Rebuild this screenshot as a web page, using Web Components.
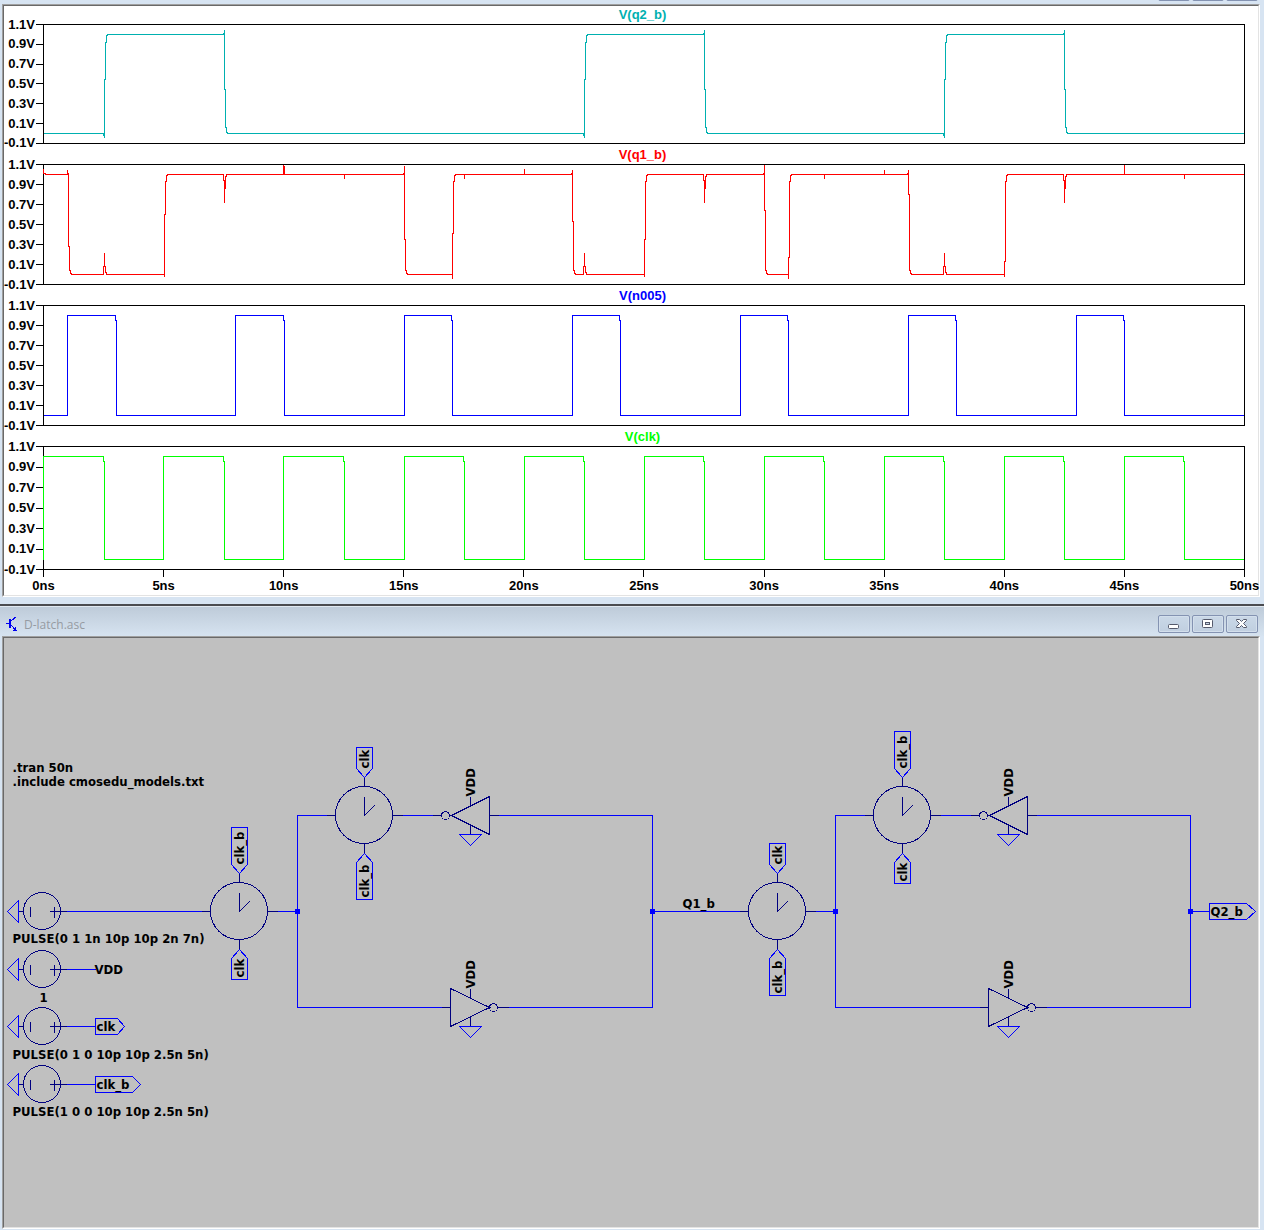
<!DOCTYPE html>
<html lang="en">
<head>
<meta charset="utf-8">
<title>D-latch.asc</title>
<style>
  body { margin: 0; background: #d7e4f2; font-family: "Liberation Sans", Arial, sans-serif; }
</style>
</head>
<body>
<sim-desktop>
  <mdi-window>
    <window-controls slot="title" cropped></window-controls>
    <wave-viewer></wave-viewer>
  </mdi-window>
  <mdi-window titled>
    <window-caption slot="title">D-latch.asc</window-caption>
    <schematic-view></schematic-view>
  </mdi-window>
</sim-desktop>

<script>
function define(name, html, setup) {
  customElements.define(name, class extends HTMLElement {
    connectedCallback() {
      if (this.shadowRoot) return;
      const root = this.attachShadow({ mode: 'open' });
      const tpl = document.createElement('template');
      tpl.innerHTML = typeof html === 'function' ? html(this) : html;
      root.append(tpl.content.cloneNode(true));
      if (setup) setup(this, root);
    }
  });
}

define('sim-desktop', `
  <style>:host { display: flex; flex-direction: column; }</style>
  <slot></slot>`);

define('mdi-window', `
  <style>
    :host { display: flex; flex-direction: column; background: #d7e4f2; padding-bottom: 7px; }
    :host([titled]) { border-top: 2px solid #4b4c50; padding-bottom: 1px; }
    header { height: 4px; overflow: hidden; display: flex; justify-content: flex-end; padding: 0 6px; }
    :host([titled]) header {
      height: 29px; border-top: 1px solid #e1e9f1; justify-content: stretch;
      background: linear-gradient(#becbd9, #d6e3f0);
    }
    .outer { margin: 0 4px 0 2px; border: 1px solid; border-color: #a0a0a0 #fff #fff #a0a0a0; }
    .inner { border: 1px solid; border-color: #696969 #e3e3e3 #e3e3e3 #696969; }
  </style>
  <header><slot name="title"></slot></header>
  <div class="outer"><div class="inner"><slot></slot></div></div>`);

define('window-controls', `
  <style>
    :host { display: flex; gap: 2px; align-items: center; }
    :host([cropped]) { align-items: flex-end; height: 1px; }
    button {
      box-sizing: border-box; width: 32px; height: 18px; padding: 0; display: flex;
      align-items: center; justify-content: center;
      border: 1px solid #8493b2; border-radius: 2px;
      background: linear-gradient(#cad8e7, #c0cfe0); box-shadow: inset 0 0 0 1px #d3dfec;
    }
    svg { display: block; width: 14px; height: 12px; }
  </style>
  <button aria-label="Minimize"><svg viewBox="0 0 14 12"><rect x="1.5" y="6.5" width="10" height="4" rx="1" fill="#fff" stroke="#555a6c"/></svg></button>
  <button aria-label="Restore"><svg viewBox="0 0 14 12"><rect x="1.5" y="1.5" width="10" height="8" rx="1" fill="#fff" stroke="#555a6c"/><rect x="4.5" y="4.5" width="4" height="2" fill="#c5d3e2" stroke="#555a6c"/></svg></button>
  <button aria-label="Close"><svg viewBox="0 0 14 12"><path d="M1.500 1.500H4.500L6.500 3.500 8.500 1.500H11.500V2.500L8.500 5.500 11.500 8.500V9.500H8.500L6.500 7.500 4.500 9.500H1.500V8.500L4.500 5.500 1.500 2.500Z" fill="#fff" stroke="#555a6c"/></svg></button>`);

define('window-caption', `
  <style>
    :host { display: flex; flex: 1; align-items: center; gap: 7px;
      font: 12px/16px "Open Sans", "Noto Sans", sans-serif; color: #969ba2; padding-top: 4px; }
    svg { width: 11px; height: 16px; display: block; }
    span { flex: 1; padding-top: 2px; }
  </style>
  <svg viewBox="0 0 11 16" fill="none" stroke="#0000f0" shape-rendering="crispEdges">
    <path d="M0 7.500H4M5.500 4.500L10.500 .5M5.500 9.500L10 14.500"/><path d="M4 3V12" stroke-width="2"/>
    <path d="M7 14.500H11M9.500 11V15M7 12.500H9"/>
  </svg>
  <span><slot></slot></span>
  <window-controls></window-controls>`);

/* ---- waveform traces: x in plot columns, y in plot rows ---- */
const NS = 24.02;
const riseColumn = t => Math.round(t * NS + 0.2);
const fallColumn = t => Math.floor(t * NS);

function tealTrace() {
  let d = 'M0 109';
  for (const [a, b] of [[2.5, 7.5], [22.5, 27.5], [37.5, 42.5]]) {
    const r = Math.ceil(a * NS), f = Math.ceil(b * NS);
    d += `H${r - 1}V111H${r}V113V55H${r + 1}V18H${r + 2}V11H${r + 3}V10H${f - 1}V9H${f}V5V65H${f + 1}V103H${f + 2}V108H${f + 3}V109`;
  }
  return d + 'H1200';
}

const red = {
  fall: (x, top, mid) => `H${x - 1}V9H${x}V${top}V${mid}H${x + 1}V106H${x + 2}V109H${x + 3}V110`,
  rise: (x, low, mid) => `H${x - 1}H${x}V${low}V${mid}H${x + 1}V17H${x + 2}V11H${x + 3}V10`,
  bump: x => `H${x - 1}V102H${x}V88V102H${x + 1}V108H${x + 2}V110`,
  notch: x => `H${x - 1}V16H${x}V38V24H${x + 1}V12H${x + 2}V10`,
  up: (x, y) => `H${x}V${y}V10`,
  dip: x => `H${x}V14V10`
};
function redTrace() {
  return 'M0 4V9H2V10H24V5V9' +
    red.fall(25, 10, 82) + red.bump(61) + red.rise(121, 112, 50) + red.notch(181) +
    red.up(240, 0) + red.up(241, 1) + red.dip(301) +
    red.fall(361, 1, 75) + red.rise(409, 114, 69) + red.dip(421) + red.up(481, 4) +
    red.fall(529, 5, 57) + red.bump(541) + red.rise(601, 112, 75) + red.notch(661) +
    red.fall(721, 0, 46) + red.rise(745, 114, 93) + red.dip(781) + red.up(841, 5) +
    red.fall(865, 5, 30) + red.bump(901) + red.rise(961, 112, 97) + red.notch(1021) +
    red.up(1081, 0) + red.dip(1141) + 'H1200';
}

function blueTrace() {
  let d = 'M0 110';
  for (let t = 1; t < 50; t += 7) {
    const r = riseColumn(t), f = fallColumn(t + 2);
    d += `H${r}V10H${f}V15H${f + 1}V110`;
  }
  return d + 'H1200';
}

function greenTrace() {
  let d = 'M0 113';
  for (let t = 0; t < 50; t += 5) {
    const r = riseColumn(t), f = fallColumn(t + 2.5);
    d += `H${r}V10H${f}V15H${f + 1}V113`;
  }
  return d + 'H1200';
}

const TRACES = { 'V(q2_b)': tealTrace, 'V(q1_b)': redTrace, 'V(n005)': blueTrace, 'V(clk)': greenTrace };

define('wave-viewer', `
  <style>
    :host { display: flex; flex-direction: column; background: #fff; padding-right: 13px;
      font: bold 13px/16px "Liberation Sans", Arial, sans-serif; color: #000; }
    .time { display: flex; justify-content: space-between; height: 25px; margin-left: 39px; }
    .time div { width: 1px; display: flex; flex-direction: column; align-items: center; gap: 1px; white-space: nowrap; }
    .time div::before { content: ""; width: 1px; height: 7px; background: #000; flex: none; }
  </style>
  <wave-pane name="V(q2_b)" rows="120" head="18" color="#00b0b0"></wave-pane>
  <wave-pane name="V(q1_b)" rows="121" head="20" color="#ff0000"></wave-pane>
  <wave-pane name="V(n005)" rows="121" head="20" color="#0000ff"></wave-pane>
  <wave-pane name="V(clk)" rows="124" head="20" color="#00ff00"></wave-pane>
  <div class="time"></div>`, (el, root) => {
  const axis = root.querySelector('.time');
  for (let t = 0; t <= 50; t += 5) {
    const mark = document.createElement('div');
    mark.textContent = t + 'ns';
    axis.append(mark);
  }
});

define('wave-pane', el => {
  const name = el.getAttribute('name'), rows = +el.getAttribute('rows');
  const labels = ['1.1V', '0.9V', '0.7V', '0.5V', '0.3V', '0.1V', '-0.1V'];
  return `
  <style>
    :host { display: grid; grid-template-columns: 39px 1fr; grid-template-rows: ${el.getAttribute('head')}px ${rows}px; }
    h2 { grid-column: 2; margin: 0; padding: 0 3px 1px 0; font: inherit; text-align: center; align-self: end;
      color: ${el.getAttribute('color')}; }
    .volts { display: flex; flex-direction: column; justify-content: space-between; margin: -8px 0; }
    .volts div { display: flex; align-items: center; justify-content: flex-end; gap: 1px; height: 17px; }
    .volts div::after { content: ""; width: 7px; height: 1px; background: #000; }
    svg { display: block; width: 100%; height: 100%; grid-column: 2; }
    path, rect { vector-effect: non-scaling-stroke; fill: none; }
  </style>
  <h2>${name}</h2>
  <div class="volts">${labels.map(v => `<div>${v}</div>`).join('')}</div>
  <svg viewBox="-0.5 -0.5 1202 ${rows}" preserveAspectRatio="none" shape-rendering="crispEdges" role="img" aria-label="${name}">
    <rect width="1201" height="${rows - 1}" stroke="#000"/>
    <path d="${TRACES[name]()}" stroke="${el.getAttribute('color')}"/>
  </svg>`;
});

/* ---- schematic symbols, on whole-pixel centres ---- */
const part = d => `<path class="part" d="${d}"/>`;
const wire = d => `<path class="wire" d="${d}"/>`;
const label = (x, y, s) => `<text x="${x}" y="${y}">${s}</text>`;
const upright = (x, y, s) => `<text transform="translate(${x} ${y}) rotate(-90)">${s}</text>`;
const node = (x, y) => `<rect x="${x - 2.5}" y="${y - 2.5}" width="5" height="5" fill="#00f"/>`;

function source(y) {
  return wire(`M7 ${y}L18 ${y - 11}V${y + 11}Z`) +
    part(`M18 ${y}H23M30 ${y - 5}V${y + 5}M49 ${y}H66M54 ${y - 5}V${y + 6}`) +
    `<circle class="part" cx="41.5" cy="${y - 0.5}" r="18.5"/>`;
}
function gate(x, y, above, below) {
  const reach = s => s === 'clk' ? 68 : 84;
  const a = y - reach(above), b = y + reach(below);
  return `<circle class="part" cx="${x - 0.5}" cy="${y - 0.5}" r="28.5"/>` +
    part(`M${x} ${y - 19}V${y}L${x + 10} ${y - 10}M${x} ${y - 38}V${y - 29}M${x} ${y + 28}V${y + 38}M${x - 38} ${y}H${x - 29}M${x + 28} ${y}H${x + 38}`) +
    wire(`M${x - 8} ${a}H${x + 8}V${y - 47}L${x} ${y - 38}L${x - 8} ${y - 47}Z`) +
    wire(`M${x - 8} ${b}H${x + 8}V${y + 47}L${x} ${y + 38}L${x - 8} ${y + 47}Z`) +
    upright(x + 4, y - 47, above) + upright(x + 4, b - 2, below);
}
function supply(x, y) {
  return part(`M${x} ${y - 19}V${y - 9}M${x} ${y + 9}V${y + 19}`) +
    wire(`M${x - 11} ${y + 19}H${x + 11}L${x} ${y + 30}Z`) + upright(x + 4, y - 19, 'VDD');
}
function inverterLeft(x, y) {
  return part(`M${x - 19} ${y}L${x + 19} ${y - 19}V${y + 19}ZM${x - 38} ${y}H${x - 29}M${x - 21} ${y}H${x - 19}M${x + 19} ${y}H${x + 28}`) +
    `<circle class="part" cx="${x - 25}" cy="${y}" r="4"/>` + supply(x, y);
}
function inverterRight(x, y) {
  return part(`M${x + 19} ${y}L${x - 20} ${y - 19}V${y + 19}ZM${x - 29} ${y}H${x - 20}M${x + 27} ${y}H${x + 38}`) +
    `<circle class="part" cx="${x + 23}" cy="${y}" r="4"/>` + supply(x, y);
}
function flag(x, y, shoulder, tip, s) {
  return wire(`M${x} ${y - 8}H${shoulder}L${tip} ${y}L${shoulder} ${y + 8}H${x}Z`) + label(x + 1, y + 4, s);
}
function stage(dx, first, second) {
  return `<g transform="translate(${dx} 0)">` +
    wire('M277 911H297M326 815H297V1007H441M402 815H432M498 815H652V1007H508') +
    gate(239, 911, first, second) + gate(364, 815, second, first) +
    inverterLeft(470, 815) + inverterRight(470, 1007) + node(297, 911) + node(652, 911) + '</g>';
}

define('schematic-view', `
  <style>
    :host { display: block; background: #c0c0c0; }
    svg { display: block; width: 100%; height: auto; }
    .wire { fill: none; stroke: #0000ff; }
    .part { fill: none; stroke: #000080; }
    text { font: bold 13px "DejaVu Sans Condensed", "DejaVu Sans", sans-serif; fill: #000; white-space: pre; }
  </style>
  <svg viewBox="3.5 637.5 1254 589" shape-rendering="crispEdges" role="img" aria-label="D-latch schematic">
    ${wire('M66 911H201M66 969H95M66 1026H95M66 1084H95M652 911H739M1190 911H1209')}
    ${[911, 969, 1026, 1084].map(source).join('')}
    ${stage(0, 'clk_b', 'clk')}
    ${stage(538, 'clk', 'clk_b')}
    ${flag(95, 1026, 117, 124, 'clk')}
    ${flag(95, 1084, 132, 140, 'clk_b')}
    ${flag(1209, 911, 1246, 1255, 'Q2_b')}
    ${label(12, 771, '.tran 50n')}
    ${label(12, 785, '.include cmosedu_models.txt')}
    ${label(12, 942, 'PULSE(0 1 1n 10p 10p 2n 7n)')}
    ${label(94, 973, 'VDD')}
    ${label(39, 1001, '1')}
    ${label(12, 1058, 'PULSE(0 1 0 10p 10p 2.5n 5n)')}
    ${label(12, 1115, 'PULSE(1 0 0 10p 10p 2.5n 5n)')}
    ${label(682, 907, 'Q1_b')}
  </svg>`);
</script>
</body>
</html>
